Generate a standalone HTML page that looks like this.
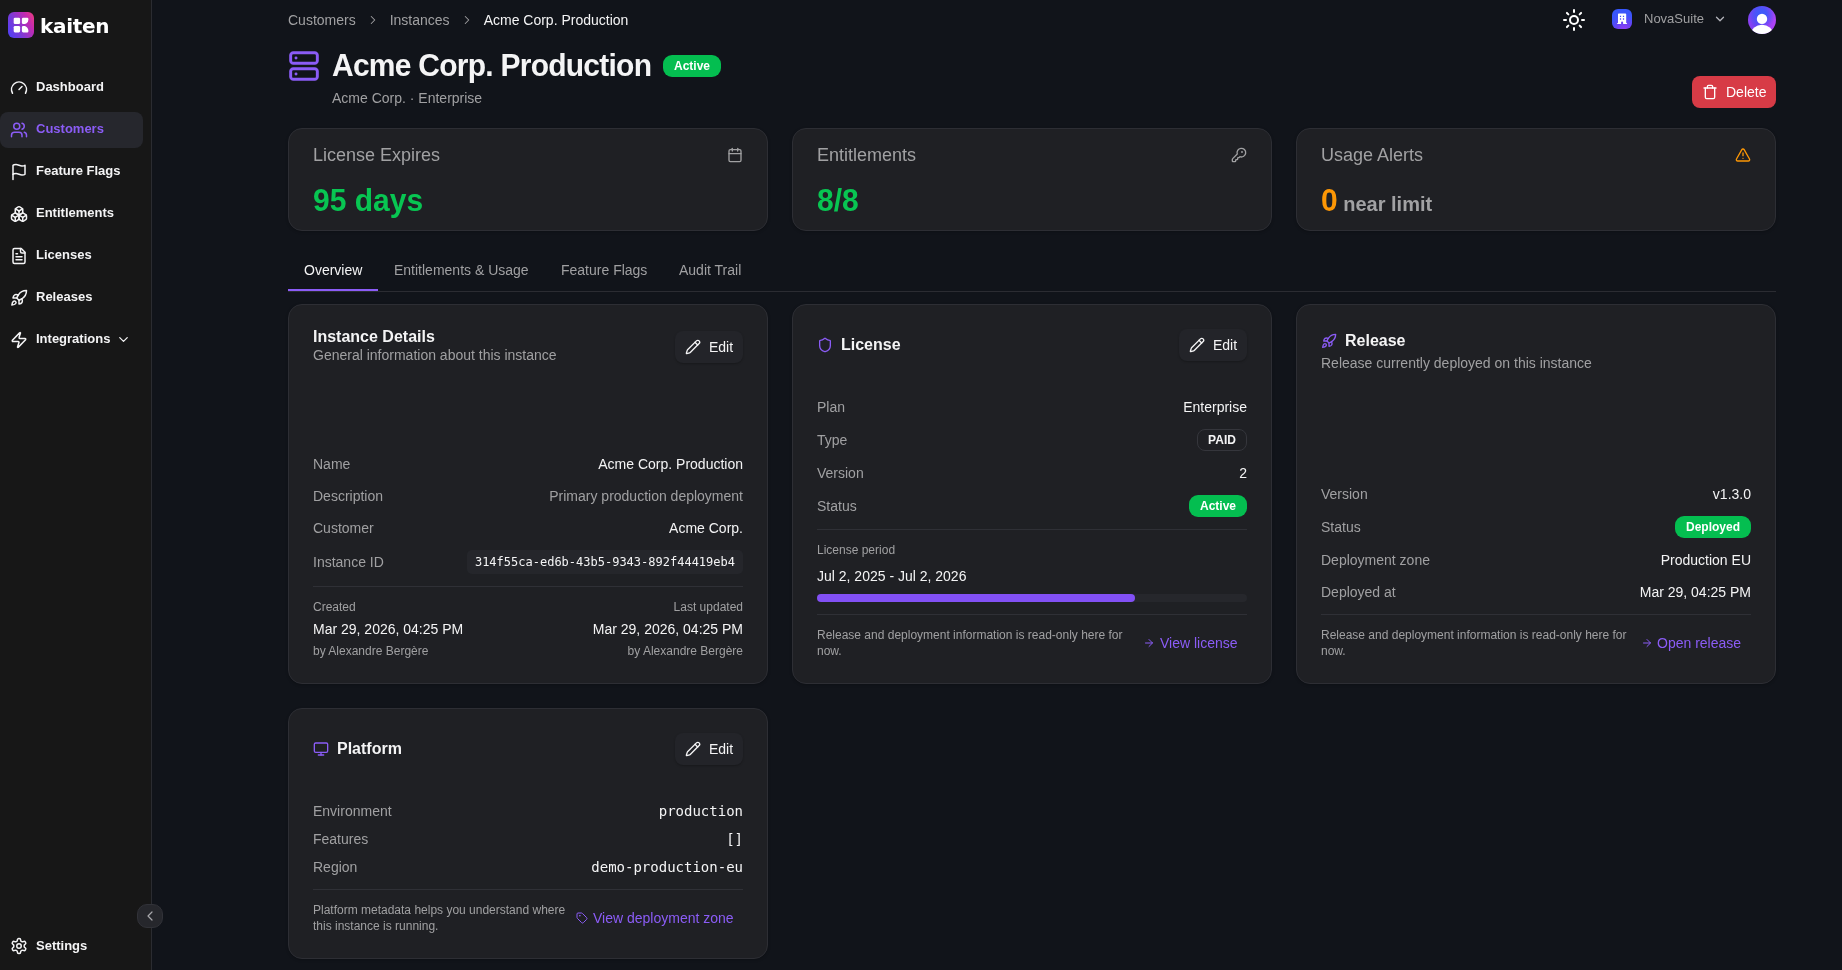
<!DOCTYPE html>
<html lang="en">
<head>
<meta charset="utf-8">
<title>Acme Corp. Production - kaiten</title>
<style>
*{box-sizing:border-box;margin:0;padding:0}
html,body{width:1842px;height:970px;overflow:hidden;background:#11141a;color:#f4f4f5;
  font-family:"Liberation Sans",Arial,sans-serif;font-size:14px;line-height:20px}
svg{display:block;fill:none;stroke:currentColor;stroke-width:2;stroke-linecap:round;stroke-linejoin:round}
#app{position:absolute;left:0;top:0;width:1842px;height:970px;will-change:transform}
/* sidebar */
#side{position:absolute;left:0;top:0;width:152px;height:970px;background:#171717;border-right:1px solid #2b2c31}
.logo{position:absolute;left:8px;top:12px;width:26px;height:26px;border-radius:6px;
  background:linear-gradient(62deg,#4a40fa 0%,#7c3ad6 38%,#c42ab0 75%,#f04078 100%)}
.brand{position:absolute;left:40px;top:12px;font-family:"DejaVu Sans","Liberation Sans",sans-serif;font-weight:bold;font-size:20px;line-height:28px;color:#fff;letter-spacing:-0.3px}
.nav{position:absolute;left:0;width:143px;height:36px;border-radius:8px;color:#f4f4f5;font-weight:bold;font-size:13px;line-height:36px}
.nav svg{position:absolute;left:10px;top:10px;width:18px;height:18px;stroke-width:2}
.nav span{position:absolute;left:36px;top:0;white-space:nowrap}
.nav.on{color:#8b5cf6}
.navbg{position:absolute;left:0;top:112px;width:143px;height:36px;border-radius:8px;background:#26272d}
.collapse{position:absolute;left:137px;top:904px;width:26px;height:24px;border-radius:10px;background:#26272c;border:1px solid #313238;color:#a8a8ac;z-index:5}
.collapse svg{position:absolute;left:4px;top:3px;width:16px;height:16px;stroke-width:1.8}
/* top */
.muted{color:#a0a0a2}
.crumb{position:absolute;top:10px;font-size:14px;line-height:20px;white-space:nowrap}
.crumb svg{width:14px;height:14px;stroke-width:1.8}

.crumbs{position:absolute;left:288px;top:10px;display:flex;align-items:center;gap:10px;font-size:14px;line-height:20px;white-space:nowrap;color:#a0a0a2}
.crumbs svg{width:14px;height:14px;stroke-width:1.8}
.crumbs b{font-weight:normal;color:#f4f4f5}
.sun{position:absolute;left:1562px;top:8px;width:24px;height:24px;color:#fff}
.org{position:absolute;left:1612px;top:9px;width:20px;height:20px;border-radius:6px;background:radial-gradient(circle at 62% 108%,#9b3df5 0%,#6a42f5 32%,#3d54fa 62%,#3358fc 100%)}
.orgname{position:absolute;left:1644px;top:9px;font-size:13px;line-height:20px;color:#a0a0a2}
.orgchev{position:absolute;left:1713.200px;top:12.400px;width:14px;height:14px;color:#b4b5bb}
.avatar{position:absolute;left:1748px;top:6px;width:28px;height:28px;border-radius:50%;overflow:hidden;background:radial-gradient(circle at 48% 30%,#3a5cfb 0%,#4656f9 22%,rgba(80,80,248,0) 58%),linear-gradient(90deg,#9040f3 0%,#6840f2 35%,#9a40f5 70%,#b544f6 100%)}
.del{position:absolute;left:1692px;top:76px;width:84px;height:32px;border-radius:8px;background:#d73b46;color:#fff;font-size:14px;line-height:32px}
.del svg{position:absolute;left:10px;top:8px;width:16px;height:16px;stroke-width:2}
.del span{position:absolute;left:34px;top:0}
.hicon{position:absolute;left:288px;top:50px;width:32px;height:32px;color:#8b5cf6;stroke-width:2.2}
h1{position:absolute;left:332px;top:46px;font-size:30px;line-height:40px;font-weight:bold;color:#f4f4f5;white-space:nowrap;letter-spacing:-0.75px;transform:scaleY(1.07);transform-origin:0 30px}
.badge{display:inline-block;height:22px;line-height:22px;padding:0 11px;border-radius:9px;font-size:12px;font-weight:bold;color:#fff;background:#04be50;white-space:nowrap;text-align:center}
.sub{position:absolute;left:332px;top:88px;font-size:14px;line-height:20px;color:#a0a0a2;white-space:nowrap}

.card{position:absolute;width:480px;background:#1f2024;border:1px solid #2d2e34;border-radius:14px;box-shadow:0 1px 3px rgba(0,0,0,.22)}
.stat{height:103px;top:128px}
.stat .t{position:absolute;left:24px;top:12px;font-size:18px;line-height:28px;color:#a1a1a3;white-space:nowrap}
.stat .v{position:absolute;left:24px;top:54px;font-size:30px;line-height:36px;font-weight:bold;white-space:nowrap;transform:scaleY(1.055);transform-origin:0 27.500px}
.stat svg{position:absolute;left:438px;top:18px;width:16px;height:16px;color:#a1a1a3}
.green{color:#08c552}
.orange{color:#fd9705}
.tabs{position:absolute;left:288px;top:250px;width:1488px;height:42px;border-bottom:1px solid #2b2c32}
.tab{position:absolute;top:10px;font-size:14px;line-height:20px;color:#a0a0a2;white-space:nowrap}
.tab.on{color:#f4f4f5}
.tabline{position:absolute;left:0;top:39px;width:90px;height:2px;background:#8b5cf6}

.x{position:absolute;white-space:nowrap;font-size:14px;line-height:20px}
.k{color:#a0a0a2}
.w{color:#f4f4f5}
.s12{font-size:12px;line-height:16px}
.ttl{font-size:16px;line-height:24px;font-weight:bold;color:#f4f4f5}
.mono{font-family:"DejaVu Sans Mono","Liberation Mono",monospace}
.edit{position:absolute;width:68px;height:32px;border-radius:8px;background:#232429;box-shadow:0 1px 2px rgba(0,0,0,.25);color:#f4f4f5;font-size:14px;line-height:32px}
.edit svg{position:absolute;left:10px;top:8px;width:16px;height:16px;stroke-width:2}
.edit span{position:absolute;left:34px;top:0}
.hr{position:absolute;height:1px;background:#2f3036;width:430px}
.pi{position:absolute;width:16px;height:16px;color:#8b5cf6}
.link{color:#8b5cf6}
.chip{position:absolute;height:24px;line-height:23px;border-radius:5px;background:#25262b;color:#f4f4f5;font-size:12px;padding:1px 8px 0;white-space:nowrap}
.obadge{position:absolute;height:22px;line-height:20px;border:1px solid #35363c;border-radius:8px;font-size:12px;font-weight:bold;color:#f4f4f5;text-align:center}
.bar{position:absolute;height:8px;border-radius:4px}
</style>
</head>
<body>
<div id="app">
<div id="side">
  <div class="logo">
    <svg viewBox="0 0 26 26" width="26" height="26" style="stroke:none;fill:#fff">
      <rect x="5.700" y="5.700" width="6.400" height="6.400" rx="1.300"/>
      <rect x="5.700" y="14" width="6.400" height="6.400" rx="1.300"/>
      <path d="M15.200 5.700h4a1.200 1.200 0 0 1 1.200 1.200v.600Q20 11.100 16.900 12.100h-1.700a1.300 1.300 0 0 1-1.300-1.300v-3.800a1.300 1.300 0 0 1 1.300-1.300z"/>
      <path d="M15.200 20.400h4a1.200 1.200 0 0 0 1.200-1.200v-.600Q20 15 16.900 14h-1.700a1.300 1.300 0 0 0-1.300 1.300v3.800a1.300 1.300 0 0 0 1.300 1.300z"/>
    </svg>
  </div>
  <div class="brand">kaiten</div>

  <div class="navbg"></div>
  <div class="nav" style="top:69px">
    <svg viewBox="0 0 24 24"><path d="m12 14 4-4"/><path d="M3.340 19a10 10 0 1 1 17.320 0"/></svg><span>Dashboard</span></div>
  <div class="nav on" style="top:111px">
    <svg viewBox="0 0 24 24"><path d="M16 21v-2a4 4 0 0 0-4-4H6a4 4 0 0 0-4 4v2"/><circle cx="9" cy="7" r="4"/><path d="M22 21v-2a4 4 0 0 0-3-3.870"/><path d="M16 3.130a4 4 0 0 1 0 7.750"/></svg><span>Customers</span></div>
  <div class="nav" style="top:153px">
    <svg viewBox="0 0 24 24"><path d="M4 15s1-1 4-1 5 2 8 2 4-1 4-1V3s-1 1-4 1-5-2-8-2-4 1-4 1z"/><line x1="4" x2="4" y1="22" y2="15"/></svg><span>Feature Flags</span></div>
  <div class="nav" style="top:195px">
    <svg viewBox="0 0 24 24"><path d="M2.970 12.920A2 2 0 0 0 2 14.630v3.240a2 2 0 0 0 .970 1.710l3 1.800a2 2 0 0 0 2.060 0L12 19v-5.500l-5-3-4.030 2.420Z"/><path d="m7 16.500-4.740-2.850"/><path d="m7 16.500 5-3"/><path d="M7 16.500v5.170"/><path d="M12 13.500V19l3.970 2.380a2 2 0 0 0 2.060 0l3-1.800a2 2 0 0 0 .970-1.710v-3.240a2 2 0 0 0-.970-1.710L17 10.500l-5 3Z"/><path d="m17 16.500-5-3"/><path d="m17 16.500 4.740-2.850"/><path d="M17 16.500v5.170"/><path d="M7.970 4.420A2 2 0 0 0 7 6.130v4.370l5 3 5-3V6.130a2 2 0 0 0-.970-1.710l-3-1.800a2 2 0 0 0-2.060 0l-3 1.800Z"/><path d="M12 8 7.260 5.150"/><path d="m12 8 4.740-2.850"/><path d="M12 13.500V8"/></svg><span>Entitlements</span></div>
  <div class="nav" style="top:237px">
    <svg viewBox="0 0 24 24"><path d="M15 2H6a2 2 0 0 0-2 2v16a2 2 0 0 0 2 2h12a2 2 0 0 0 2-2V7Z"/><path d="M14 2v4a2 2 0 0 0 2 2h4"/><path d="M10 9H8"/><path d="M16 13H8"/><path d="M16 17H8"/></svg><span>Licenses</span></div>
  <div class="nav" style="top:279px">
    <svg viewBox="0 0 24 24"><path d="M4.500 16.500c-1.500 1.260-2 5-2 5s3.740-.5 5-2c.710-.840.700-2.130-.090-2.910a2.180 2.180 0 0 0-2.910-.090z"/><path d="m12 15-3-3a22 22 0 0 1 2-3.950A12.880 12.880 0 0 1 22 2c0 2.720-.780 7.500-6 11a22.350 22.350 0 0 1-4 2z"/><path d="M9 12H4s.550-3.030 2-4c1.620-1.080 5 0 5 0"/><path d="M12 15v5s3.030-.550 4-2c1.080-1.620 0-5 0-5"/></svg><span>Releases</span></div>
  <div class="nav" style="top:321px">
    <svg viewBox="0 0 24 24"><path d="M4 14a1 1 0 0 1-.780-1.630l9.900-10.200a.5.5 0 0 1 .860.460l-1.920 6.020A1 1 0 0 0 13 10h7a1 1 0 0 1 .780 1.630l-9.900 10.200a.5.5 0 0 1-.860-.460l1.920-6.020A1 1 0 0 0 11 14z"/></svg><span>Integrations</span>
    <svg viewBox="0 0 24 24" style="left:116px;top:11px;width:15px;height:15px"><path d="m6 9 6 6 6-6"/></svg></div>
  <div class="nav" style="top:928px">
    <svg viewBox="0 0 24 24" style="top:9px"><path d="M12.220 2h-.440a2 2 0 0 0-2 2v.180a2 2 0 0 1-1 1.730l-.430.250a2 2 0 0 1-2 0l-.150-.080a2 2 0 0 0-2.730.730l-.220.380a2 2 0 0 0 .730 2.730l.150.100a2 2 0 0 1 1 1.720v.510a2 2 0 0 1-1 1.740l-.150.090a2 2 0 0 0-.730 2.730l.220.380a2 2 0 0 0 2.730.730l.150-.080a2 2 0 0 1 2 0l.430.250a2 2 0 0 1 1 1.730V20a2 2 0 0 0 2 2h.440a2 2 0 0 0 2-2v-.180a2 2 0 0 1 1-1.730l.430-.250a2 2 0 0 1 2 0l.150.080a2 2 0 0 0 2.730-.730l.220-.390a2 2 0 0 0-.730-2.730l-.150-.080a2 2 0 0 1-1-1.740v-.5a2 2 0 0 1 1-1.740l.150-.090a2 2 0 0 0 .730-2.730l-.220-.380a2 2 0 0 0-2.730-.730l-.150.080a2 2 0 0 1-2 0l-.430-.250a2 2 0 0 1-1-1.730V4a2 2 0 0 0-2-2z"/><circle cx="12" cy="12" r="3"/></svg><span>Settings</span></div>
</div>
<div class="collapse"><svg viewBox="0 0 24 24"><path d="m15 18-6-6 6-6"/></svg></div>

<!-- TOPBAR -->
<div class="crumbs"><span>Customers</span><svg viewBox="0 0 24 24"><path d="m9 18 6-6-6-6"/></svg><span>Instances</span><svg viewBox="0 0 24 24"><path d="m9 18 6-6-6-6"/></svg><b>Acme Corp. Production</b></div>
<svg class="sun" viewBox="0 0 24 24"><circle cx="12" cy="12" r="4"/><path d="M12 2v2"/><path d="M12 20v2"/><path d="m4.930 4.930 1.410 1.410"/><path d="m17.660 17.660 1.410 1.410"/><path d="M2 12h2"/><path d="M20 12h2"/><path d="m6.340 17.660-1.410 1.410"/><path d="m19.070 4.930-1.410 1.410"/></svg>
<div class="org"><svg viewBox="0 0 20 20" width="20" height="20" style="stroke:none;fill:#fff"><path fill-rule="evenodd" d="M6 5.200a.8.800 0 0 1 .8-.8h6.600a.8.800 0 0 1 .8.800v8.900h.4a.5.500 0 0 1 0 1h-3.500v-1.500a1 1 0 0 0-2 0v1.500h-3.500a.5.500 0 0 1 0-1h.4zM7.900 6.700v1.400h1.200V6.700zm3 0v1.400h1.200V6.700zM7.900 9.300v1.400h1.200V9.300zm3 0v1.400h1.200V9.300z"/></svg></div>
<div class="orgname">NovaSuite</div>
<svg class="orgchev" viewBox="0 0 24 24" style="stroke-width:2.2"><path d="m6 9 6 6 6-6"/></svg>
<div class="avatar"><svg viewBox="0 0 28 28" width="28" height="28" style="stroke:none;fill:#fff"><circle cx="14" cy="12.900" r="5.200"/><ellipse cx="14" cy="28" rx="11" ry="9.300"/></svg></div>
<!-- HEADER -->
<svg class="hicon" viewBox="0 0 24 24"><rect width="20" height="8" x="2" y="2" rx="2" ry="2"/><rect width="20" height="8" x="2" y="14" rx="2" ry="2"/><line x1="6" x2="6.010" y1="6" y2="6"/><line x1="6" x2="6.010" y1="18" y2="18"/></svg>
<h1>Acme Corp. Production</h1>
<div class="badge" style="position:absolute;left:663px;top:55px;width:58px;padding:0">Active</div>
<div class="sub">Acme Corp. · Enterprise</div>
<div class="del"><svg viewBox="0 0 24 24"><path d="M3 6h18"/><path d="M19 6v14c0 1-1 2-2 2H7c-1 0-2-1-2-2V6"/><path d="M8 6V4c0-1 1-2 2-2h4c1 0 2 1 2 2v2"/></svg><span>Delete</span></div>
<!-- STATS -->
<div class="card stat" style="left:288px"><div class="t">License Expires</div>
  <svg viewBox="0 0 24 24"><path d="M8 2v4"/><path d="M16 2v4"/><rect width="18" height="18" x="3" y="4" rx="2"/><path d="M3 10h18"/></svg>
  <div class="v green">95 days</div></div>
<div class="card stat" style="left:792px"><div class="t">Entitlements</div>
  <svg viewBox="0 0 24 24"><path d="M2.586 17.414A2 2 0 0 0 2 18.828V21a1 1 0 0 0 1 1h3a1 1 0 0 0 1-1v-1a1 1 0 0 1 1-1h1a1 1 0 0 0 1-1v-1a1 1 0 0 1 1-1h.172a2 2 0 0 0 1.414-.586l.814-.814a6.500 6.500 0 1 0-4-4z"/><circle cx="16.500" cy="7.500" r=".5" fill="currentColor"/></svg>
  <div class="v green">8/8</div></div>
<div class="card stat" style="left:1296px"><div class="t">Usage Alerts</div>
  <svg viewBox="0 0 24 24" style="color:#fd9705"><path d="m21.730 18-8-14a2 2 0 0 0-3.480 0l-8 14A2 2 0 0 0 4 21h16a2 2 0 0 0 1.730-3"/><path d="M12 9v4"/><path d="M12 17h.010"/></svg>
  <div class="v orange">0<span style="font-size:20px;color:#a1a1a3"> near limit</span></div></div>
<!-- TABS -->
<div class="tabs">
  <div class="tab on" style="left:16px">Overview</div>
  <div class="tab" style="left:106px">Entitlements &amp; Usage</div>
  <div class="tab" style="left:273px">Feature Flags</div>
  <div class="tab" style="left:391px">Audit Trail</div>
  <div class="tabline"></div>
</div>
<!-- CARDS -->
<div class="card" style="left:288px;top:304px;height:380px"></div>
<div class="card" style="left:792px;top:304px;height:380px"></div>
<div class="card" style="left:1296px;top:304px;height:380px"></div>
<div class="card" style="left:288px;top:708px;height:251px"></div>

<!-- Instance details -->
<div class="x ttl" style="left:313px;top:325px">Instance Details</div>
<div class="x k" style="left:313px;top:345px">General information about this instance</div>
<div class="edit" style="left:675px;top:331px"><svg viewBox="0 0 24 24"><path d="M21.174 6.812a1 1 0 0 0-3.986-3.987L3.842 16.174a2 2 0 0 0-.5.830l-1.321 4.352a.5.500 0 0 0 .623.622l4.353-1.320a2 2 0 0 0 .830-.497z"/><path d="m15 5 4 4"/></svg><span>Edit</span></div>
<div class="x k" style="left:313px;top:454px">Name</div><div class="x w" style="right:1099px;top:454px">Acme Corp. Production</div>
<div class="x k" style="left:313px;top:486px">Description</div><div class="x k" style="right:1099px;top:486px">Primary production deployment</div>
<div class="x k" style="left:313px;top:518px">Customer</div><div class="x w" style="right:1099px;top:518px">Acme Corp.</div>
<div class="x k" style="left:313px;top:552px">Instance ID</div><div class="chip mono" style="right:1099px;top:550px">314f55ca-ed6b-43b5-9343-892f44419eb4</div>
<div class="hr" style="left:313px;top:586px"></div>
<div class="x k s12" style="left:313px;top:599px">Created</div><div class="x k s12" style="right:1099px;top:599px">Last updated</div>
<div class="x w" style="left:313px;top:619px">Mar 29, 2026, 04:25 PM</div><div class="x w" style="right:1099px;top:619px">Mar 29, 2026, 04:25 PM</div>
<div class="x k s12" style="left:313px;top:643px">by Alexandre Bergère</div><div class="x k s12" style="right:1099px;top:643px">by Alexandre Bergère</div>

<!-- License -->
<svg class="pi" viewBox="0 0 24 24" style="left:817px;top:337px"><path d="M20 13c0 5-3.500 7.500-7.660 8.950a1 1 0 0 1-.670-.010C7.500 20.500 4 18 4 13V6a1 1 0 0 1 1-1c2 0 4.500-1.200 6.240-2.720a1.170 1.170 0 0 1 1.520 0C14.510 3.810 17 5 19 5a1 1 0 0 1 1 1z"/></svg>
<div class="x ttl" style="left:841px;top:333px">License</div>
<div class="edit" style="left:1179px;top:329px"><svg viewBox="0 0 24 24"><path d="M21.174 6.812a1 1 0 0 0-3.986-3.987L3.842 16.174a2 2 0 0 0-.5.830l-1.321 4.352a.5.500 0 0 0 .623.622l4.353-1.320a2 2 0 0 0 .830-.497z"/><path d="m15 5 4 4"/></svg><span>Edit</span></div>
<div class="x k" style="left:817px;top:397px">Plan</div><div class="x w" style="right:595px;top:397px">Enterprise</div>
<div class="x k" style="left:817px;top:430px">Type</div><div class="obadge" style="left:1197px;top:429px;width:50px">PAID</div>
<div class="x k" style="left:817px;top:463px">Version</div><div class="x w" style="right:595px;top:463px">2</div>
<div class="x k" style="left:817px;top:496px">Status</div><div class="badge" style="position:absolute;left:1189px;top:495px;width:58px;padding:0">Active</div>
<div class="hr" style="left:817px;top:529px"></div>
<div class="x k s12" style="left:817px;top:542px">License period</div>
<div class="x w" style="left:817px;top:566px">Jul 2, 2025 - Jul 2, 2026</div>
<div class="bar" style="left:817px;top:594px;width:430px;background:#26272c"></div>
<div class="bar" style="left:817px;top:594px;width:318px;background:#8250f5"></div>
<div class="hr" style="left:817px;top:614px"></div>
<div class="x k s12" style="left:817px;top:627px;white-space:normal;width:320px">Release and deployment information is read-only here for now.</div>
<svg viewBox="0 0 24 24" class="pi" style="width:12px;height:12px;left:1143px;top:637px"><path d="M5 12h14"/><path d="m12 5 7 7-7 7"/></svg>
<div class="x link" style="left:1160px;top:633px">View license</div>

<!-- Release -->
<svg class="pi" viewBox="0 0 24 24" style="left:1321px;top:333px"><path d="M4.500 16.500c-1.500 1.260-2 5-2 5s3.740-.5 5-2c.710-.840.700-2.130-.090-2.910a2.180 2.180 0 0 0-2.910-.090z"/><path d="m12 15-3-3a22 22 0 0 1 2-3.950A12.880 12.880 0 0 1 22 2c0 2.720-.780 7.500-6 11a22.350 22.350 0 0 1-4 2z"/><path d="M9 12H4s.550-3.030 2-4c1.620-1.080 5 0 5 0"/><path d="M12 15v5s3.030-.550 4-2c1.080-1.620 0-5 0-5"/></svg>
<div class="x ttl" style="left:1345px;top:329px">Release</div>
<div class="x k" style="left:1321px;top:353px">Release currently deployed on this instance</div>
<div class="x k" style="left:1321px;top:484px">Version</div><div class="x w" style="right:91px;top:484px">v1.3.0</div>
<div class="x k" style="left:1321px;top:517px">Status</div><div class="badge" style="position:absolute;left:1675px;top:516px;width:76px;padding:0">Deployed</div>
<div class="x k" style="left:1321px;top:550px">Deployment zone</div><div class="x w" style="right:91px;top:550px">Production EU</div>
<div class="x k" style="left:1321px;top:582px">Deployed at</div><div class="x w" style="right:91px;top:582px">Mar 29, 04:25 PM</div>
<div class="hr" style="left:1321px;top:614px"></div>
<div class="x k s12" style="left:1321px;top:627px;white-space:normal;width:320px">Release and deployment information is read-only here for now.</div>
<svg viewBox="0 0 24 24" class="pi" style="width:12px;height:12px;left:1641px;top:637px"><path d="M5 12h14"/><path d="m12 5 7 7-7 7"/></svg>
<div class="x link" style="left:1657px;top:633px">Open release</div>

<!-- Platform -->
<svg class="pi" viewBox="0 0 24 24" style="left:313px;top:741px"><rect width="20" height="14" x="2" y="3" rx="2"/><line x1="8" x2="16" y1="21" y2="21"/><line x1="12" x2="12" y1="17" y2="21"/></svg>
<div class="x ttl" style="left:337px;top:737px">Platform</div>
<div class="edit" style="left:675px;top:733px"><svg viewBox="0 0 24 24"><path d="M21.174 6.812a1 1 0 0 0-3.986-3.987L3.842 16.174a2 2 0 0 0-.5.830l-1.321 4.352a.5.500 0 0 0 .623.622l4.353-1.320a2 2 0 0 0 .830-.497z"/><path d="m15 5 4 4"/></svg><span>Edit</span></div>
<div class="x k" style="left:313px;top:801px">Environment</div><div class="x w mono" style="right:1099px;top:801px">production</div>
<div class="x k" style="left:313px;top:829px">Features</div><div class="x w mono" style="right:1099px;top:829px">[]</div>
<div class="x k" style="left:313px;top:857px">Region</div><div class="x w mono" style="right:1099px;top:857px">demo-production-eu</div>
<div class="hr" style="left:313px;top:889px"></div>
<div class="x k s12" style="left:313px;top:902px;white-space:normal;width:260px">Platform metadata helps you understand where this instance is running.</div>
<svg class="pi" viewBox="0 0 24 24" style="left:576px;top:912px;width:12px;height:12px"><path d="M12.586 2.586A2 2 0 0 0 11.172 2H4a2 2 0 0 0-2 2v7.172a2 2 0 0 0 .586 1.414l8.704 8.704a2.426 2.426 0 0 0 3.420 0l6.580-6.580a2.426 2.426 0 0 0 0-3.420z"/><circle cx="7.500" cy="7.500" r=".5" fill="currentColor"/></svg>
<div class="x link" style="left:593px;top:908px">View deployment zone</div>
</div>
</body>
</html>
